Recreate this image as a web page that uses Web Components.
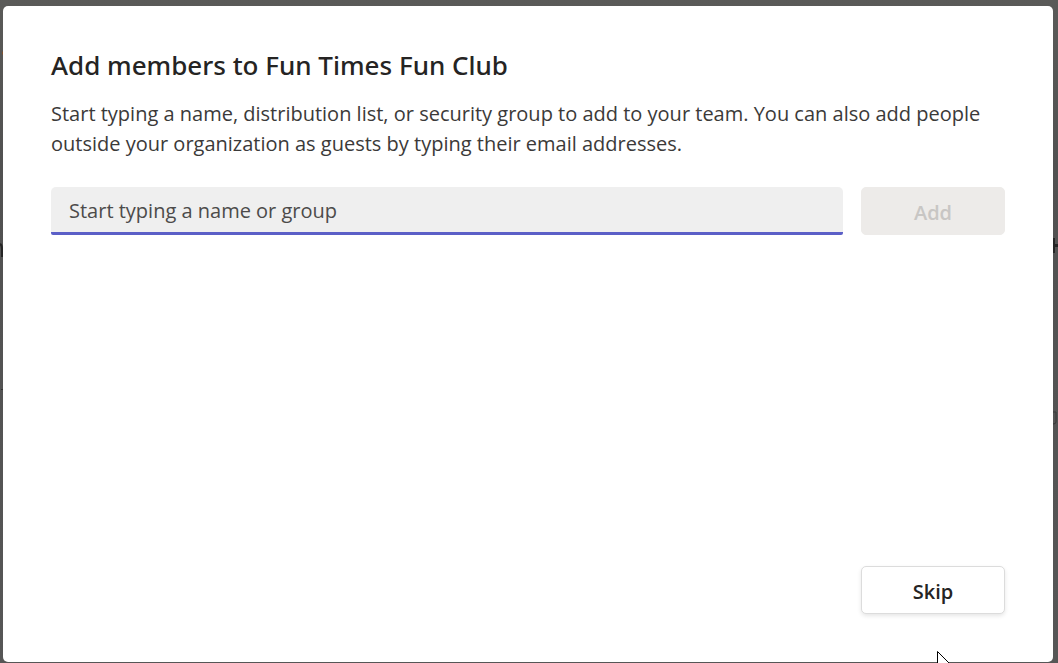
<!DOCTYPE html>
<html lang="en">
<head>
<meta charset="utf-8">
<meta name="viewport" content="width=device-width, initial-scale=1">
<title>Add members</title>
<style>
  html, body { height: 100%; }
  body {
    margin: 0;
    overflow: hidden;
    background: #565656;
    color: #252423;
    font-family: "Segoe UI", "Open Sans", "Noto Sans", sans-serif;
  }
</style>
</head>
<body>
<dialog-backdrop>
  <member-dialog>
    <span slot="title">Add members to Fun Times Fun Club</span>
    <span slot="text">Start typing a name, distribution list, or security group to add to your team. You can also add people outside your organization as guests by typing their email addresses.</span>
    <people-picker placeholder="Start typing a name or group"></people-picker>
    <team-button slot="footer">Skip</team-button>
  </member-dialog>
</dialog-backdrop>

<script>
// Dimmed page behind the dialog
class DialogBackdrop extends HTMLElement {
  constructor() {
    super();
    this.attachShadow({mode:'open'});
    this.shadowRoot.innerHTML = `
      <style>
        :host{
          display:flex;
          position:relative;
          box-sizing:border-box;
          height:100vh;
          padding:6px 5px 1px 3px;
          background:linear-gradient(#5a5a58, #515151 25%, #565656);
        }
        /* what shows of the page at the dialog's edges */
        svg{position:absolute;top:0;height:100%;fill:none;stroke:#252525}
        .left{left:0;width:3px}
        .right{right:0;width:5px}
        ::slotted(*){flex:1;min-width:0}
      </style>
      <svg class="left" aria-hidden="true">
        <path d="M2 53h1" stroke="#80512f" stroke-width="3"/>
        <path d="M0 244q2 1 2 5v8" stroke-width="2"/>
        <path d="M1 389.500h2" stroke="#333"/>
      </svg>
      <svg class="right" aria-hidden="true">
        <path d="M1 238v15" stroke-width="2"/>
        <path d="M0 245.500h5" stroke-width="3"/>
        <path d="M0 412h3v10q0 2-3 2" stroke="#383838"/>
      </svg>
      <slot></slot>
    `;
  }
}

class MemberDialog extends HTMLElement {
  constructor() {
    super();
    this.attachShadow({mode:'open'});
    this.shadowRoot.innerHTML = `
      <style>
        :host{display:flex}
        section{
          flex:1;
          display:flex;
          flex-direction:column;
          box-sizing:border-box;
          min-width:0;
          padding:41px 48px 48px;
          background:#fff;
          border-radius:5px;
        }
        h1{margin:0;font-family:"Segoe UI","Noto Sans",sans-serif;font-size:26px;line-height:36px;font-weight:500}
        p{margin:16px 0 28px;font-size:20px;line-height:30px;color:#3b3a39}
        footer{display:flex;justify-content:flex-end;margin-top:auto}
      </style>
      <section role="dialog" aria-labelledby="title" aria-describedby="text">
        <h1 id="title"><slot name="title"></slot></h1>
        <p id="text"><slot name="text"></slot></p>
        <slot></slot>
        <footer><slot name="footer"></slot></footer>
      </section>
    `;
  }
}

class PeoplePicker extends HTMLElement {
  constructor() {
    super();
    this.attachShadow({mode:'open'});
    this.shadowRoot.innerHTML = `
      <style>
        :host{display:block}
        form{display:flex;gap:18px}
        input{
          flex:1;
          min-width:0;
          height:48px;
          box-sizing:border-box;
          padding:0 18px 2px;
          border:0;
          border-radius:5px 5px 2px 2px;
          outline:0;
          background:linear-gradient(#5b5fc7, #5b5fc7) bottom / 100% 3px no-repeat #efefef;
          color:#252423;
          font:inherit;
          font-size:20px;
        }
        input::placeholder{color:#4c4b4a;opacity:1}
      </style>
      <form>
        <input type="text" autocomplete="off">
        <team-button disabled>Add</team-button>
      </form>
    `;
  }

  connectedCallback() {
    const input = this.shadowRoot.querySelector('input');
    const button = this.shadowRoot.querySelector('team-button');
    input.placeholder = this.getAttribute('placeholder') || '';
    input.setAttribute('aria-label', input.placeholder);
    // Add is only available once there is something to add
    input.addEventListener('input', () => {
      button.toggleAttribute('disabled', !input.value.trim());
    });
    this.shadowRoot.querySelector('form').addEventListener('submit', e => e.preventDefault());
  }
}

class TeamButton extends HTMLElement {
  static get observedAttributes() { return ['disabled']; }

  constructor() {
    super();
    this.attachShadow({mode:'open'});
    this.shadowRoot.innerHTML = `
      <style>
        :host{display:block}
        button{
          width:144px;
          height:48px;
          padding:2px 0 0;
          border:1px solid #dcdcdc;
          border-radius:5px;
          background:#fff;
          box-shadow:0 2px 4px rgba(0,0,0,.1);
          color:#252423;
          font:inherit;
          font-size:20px;
          font-weight:600;
        }
        button:disabled{
          border-color:#edebe9;
          background:#edebe9;
          box-shadow:none;
          color:#c8c6c4;
        }
      </style>
      <button type="button"><slot></slot></button>
    `;
  }

  attributeChangedCallback() {
    this.shadowRoot.querySelector('button').disabled = this.hasAttribute('disabled');
  }
}

// Mouse pointer, coming in from the bottom edge
class MousePointer extends HTMLElement {
  constructor() {
    super();
    this.attachShadow({mode:'open'});
    this.shadowRoot.innerHTML = `
      <style>
        :host{position:fixed;right:101px;bottom:-8px;width:20px;height:20px;pointer-events:none}
        svg{display:block}
      </style>
      <svg width="20" height="20" viewBox="0 0 20 20" aria-hidden="true">
        <path d="M.5 .5v18l4-4h10z" fill="#fff" stroke="#000"/>
      </svg>
    `;
  }
}

customElements.define('team-button', TeamButton);
customElements.define('people-picker', PeoplePicker);
customElements.define('member-dialog', MemberDialog);
customElements.define('dialog-backdrop', DialogBackdrop);
customElements.define('mouse-pointer', MousePointer);
document.body.append(document.createElement('mouse-pointer'));
</script>
</body>
</html>
